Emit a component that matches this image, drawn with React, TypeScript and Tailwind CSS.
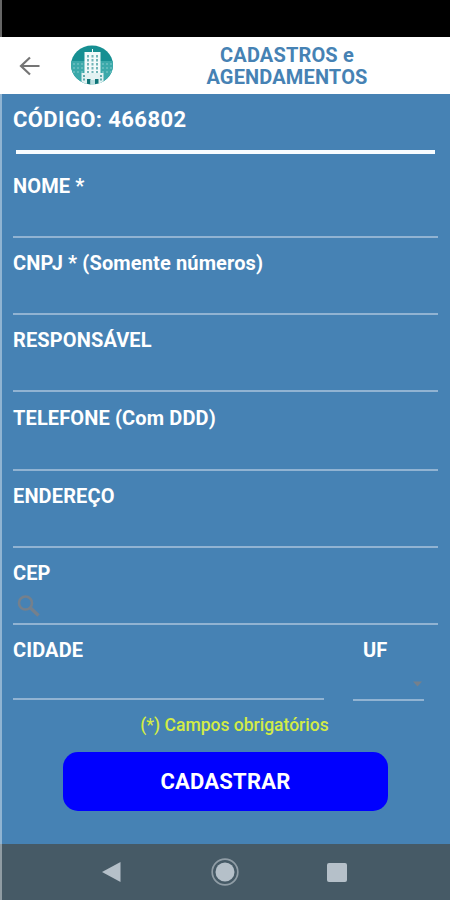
import { useState } from 'react';
import clsx from 'clsx';

const fields = [
  { id: 'nome', label: 'NOME *', height: 'h-[73px]' },
  { id: 'cnpj', label: 'CNPJ * (Somente números)', height: 'h-[77px]' },
  { id: 'responsavel', label: 'RESPONSÁVEL', height: 'h-[77px]' },
  { id: 'telefone', label: 'TELEFONE (Com DDD)', height: 'h-[79px]' },
  { id: 'endereco', label: 'ENDEREÇO', height: 'h-[77px]' },
  { id: 'cep', label: 'CEP', height: 'h-[77px]' },
];

const labelClass = 'whitespace-nowrap text-[20px] leading-6 font-bold tracking-[0.13px] text-white';

function BuildingLogo() {
  return (
    <svg width="42" height="40" viewBox="0 0 42 40">
      <defs>
        <clipPath id="logo-clip">
          <ellipse cx="21" cy="20" rx="21" ry="19.5" />
        </clipPath>
      </defs>
      <g clipPath="url(#logo-clip)">
        <rect width="42" height="40" fill="#168f92" />
        <path d="M0 16h14v24H0zM29 16h13v24H29z" fill="#3ba9aa" />
        <path d="M3 18v10M7 18v10M11 18v10M32 18v10M36 18v10M40 18v10" stroke="#7cc6c6" strokeWidth="1.2" strokeDasharray="2 2" />
        <path d="M21 4h1v3h7.5v31h-16V7H21z" fill="#f2fafa" />
        <path d="M10.5 28h22v12h-22z" fill="#e3f2f2" />
        <path d="M17 10v18M21.5 10v18M26 10v18" stroke="#72b5b8" strokeWidth="2" strokeDasharray="2.5 1.5" />
        <path d="M13 30v7M30 30v7" stroke="#5fa9ad" strokeWidth="2" strokeDasharray="2 1.5" />
        <path d="M16 34h3.5v6H16zM24 34h3.5v6H24z" fill="#0f7478" />
        <path d="M19.5 35H24v5h-4.5z" fill="#b9dfe0" />
      </g>
    </svg>
  );
}

function Header() {
  return (
    <header className="flex h-[57px] items-center bg-white">
      <button type="button" aria-label="Voltar" className="ml-[18px]">
        <svg width="22" height="20" viewBox="0 0 22 20" fill="none" stroke="#757575" strokeWidth="2.2">
          <path d="M21.5 10H3M12 1.5L3 10L12 18.5" />
        </svg>
      </button>
      <div className="mb-px ml-[31px]">
        <BuildingLogo />
      </div>
      <h1 className="mt-px ml-[54px] w-[240px] text-center text-[20px] leading-[22px] font-bold tracking-[0.15px] text-[#4682b4]">
        CADASTROS e
        <br />
        AGENDAMENTOS
      </h1>
    </header>
  );
}

function SearchIcon() {
  return (
    <svg width="23" height="22" viewBox="0 0 23 22" fill="none" stroke="#75808c">
      <circle cx="8.5" cy="8" r="6.5" strokeWidth="2.6" />
      <path d="M13 12.5L21.5 20.5" strokeWidth="3.4" />
    </svg>
  );
}

function NavBar() {
  return (
    <nav className="flex h-14 items-center bg-[#465a66] pl-[102px]">
      <svg width="19" height="20" viewBox="0 0 19 20">
        <path d="M0 10L18.5 0V20z" fill="#b5c0c9" />
      </svg>
      <svg className="ml-[90px]" width="28" height="28" viewBox="0 0 28 28">
        <circle cx="14" cy="14" r="12.8" fill="none" stroke="#909da6" strokeWidth="1.7" />
        <circle cx="14" cy="14" r="9.5" fill="#b5c0c9" />
      </svg>
      <div className="ml-[88px] h-[19px] w-5 rounded-[2px] bg-[#b5c0c9]" />
    </nav>
  );
}

export default function App() {
  const [values, setValues] = useState<Record<string, string>>({});

  const setValue = (id: string, value: string) => setValues((prev) => ({ ...prev, [id]: value }));

  return (
    <div className="relative flex h-[900px] w-[450px] flex-col overflow-hidden bg-[#4682b4] font-['Roboto',sans-serif]">
      <div className="h-[37px] bg-black" />
      <Header />

      <main className="flex h-[750px] flex-col pr-3 pl-[13px]">
        <div className="mt-[14px] text-[22px] leading-6 font-bold tracking-[0.4px] whitespace-nowrap text-white">CÓDIGO: 466802</div>
        <div className="mt-[18px] mr-[3px] ml-[3px] h-1 shrink-0 bg-[#f8fcff]" />

        <div className="mt-[11px]">
          {fields.map((field) => (
            <div key={field.id} className={clsx('flex flex-col border-b-2 border-[#91b3d2]', field.height)}>
              <label
                htmlFor={field.id}
                className={clsx(labelClass, field.id === 'nome' ? 'mt-[9px]' : field.id === 'telefone' ? 'mt-[14px]' : 'mt-[13px]')}
              >
                {field.label}
              </label>
              <div className="flex flex-1 items-start">
                {field.id === 'cep' && (
                  <div className="mt-[10px] ml-1">
                    <SearchIcon />
                  </div>
                )}
                <input
                  id={field.id}
                  value={values[field.id] ?? ''}
                  onChange={(e) => setValue(field.id, e.target.value)}
                  className="h-8 min-w-0 flex-1 bg-transparent text-lg text-white outline-none"
                />
              </div>
            </div>
          ))}
        </div>

        <div className="flex items-start">
          <div className="flex h-[75px] w-[311px] flex-col border-b-2 border-[#91b3d2]">
            <label htmlFor="cidade" className={clsx(labelClass, 'mt-[13px]')}>CIDADE</label>
            <input
              id="cidade"
              value={values.cidade ?? ''}
              onChange={(e) => setValue('cidade', e.target.value)}
              className="h-8 w-full bg-transparent text-lg text-white outline-none"
            />
          </div>
          <div className="ml-[29px] flex h-[76px] w-[71px] flex-col border-b-2 border-[#91b3d2]">
            <span className={clsx(labelClass, 'mt-[13px] ml-[10px]')}>UF</span>
            <svg className="mt-[19px] mr-0.5 self-end" width="9" height="6" viewBox="0 0 9 6">
              <path d="M0 0.5h9L4.5 5.5z" fill="#75808c" />
            </svg>
          </div>
        </div>

        <p className="mt-[12px] pl-[18px] text-center text-[17.5px] leading-6 font-medium text-[#d3ec45]">(*) Campos obrigatórios</p>

        <button
          type="button"
          className="mt-[15px] ml-[50px] h-[59px] w-[325px] rounded-[15px] bg-[#0000ff] text-[22px] font-bold tracking-[0.2px] text-white"
        >
          CADASTRAR
        </button>
      </main>

      <NavBar />

      {/* pale edge down the left side of the screen */}
      <div className="absolute inset-y-0 left-0 w-0.5 bg-white/40" />
    </div>
  );
}
